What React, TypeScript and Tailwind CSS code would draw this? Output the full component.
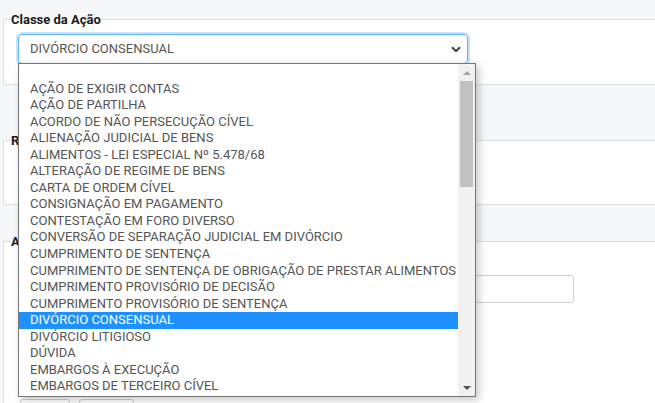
const options = [
  '',
  'AÇÃO DE EXIGIR CONTAS',
  'AÇÃO DE PARTILHA',
  'ACORDO DE NÃO PERSECUÇÃO CÍVEL',
  'ALIENAÇÃO JUDICIAL DE BENS',
  'ALIMENTOS - LEI ESPECIAL Nº 5.478/68',
  'ALTERAÇÃO DE REGIME DE BENS',
  'CARTA DE ORDEM CÍVEL',
  'CONSIGNAÇÃO EM PAGAMENTO',
  'CONTESTAÇÃO EM FORO DIVERSO',
  'CONVERSÃO DE SEPARAÇÃO JUDICIAL EM DIVÓRCIO',
  'CUMPRIMENTO DE SENTENÇA',
  'CUMPRIMENTO DE SENTENÇA DE OBRIGAÇÃO DE PRESTAR ALIMENTOS',
  'CUMPRIMENTO PROVISÓRIO DE DECISÃO',
  'CUMPRIMENTO PROVISÓRIO DE SENTENÇA',
  'DIVÓRCIO CONSENSUAL',
  'DIVÓRCIO LITIGIOSO',
  'DÚVIDA',
  'EMBARGOS À EXECUÇÃO',
  'EMBARGOS DE TERCEIRO CÍVEL',
];

const selected = 'DIVÓRCIO CONSENSUAL';

export default function App() {
  return (
    <div
      className="relative w-[655px] h-[403px] overflow-hidden bg-[#f6f7f9] pl-[3px] pt-[12px]"
      style={{ fontFamily: 'Roboto, "Liberation Sans", sans-serif' }}
    >
      {/* Classe da Ação */}
      <fieldset className="w-[720px] h-[73px] border border-[#dcdee2] bg-white">
        <legend className="ml-[7px] text-[13px] leading-[15px] font-bold text-[#1a1a1a]">
          Classe da Ação
        </legend>
        <div className="px-[14px] pt-[7px]">
          <div className="w-[450px] h-[30px] rounded-[4px] border border-[#5bb4ef] shadow-[0_0_0_2px_rgba(102,175,233,0.35)] flex items-center justify-between pl-[11px] pr-[5px] text-[13px] text-[#555]">
            <span>{selected}</span>
            <svg width="10" height="7" viewBox="0 0 10 7" className="mr-[1px]">
              <path d="M1 1.2 L5 5 L9 1.2" fill="none" stroke="#444" strokeWidth="2" />
            </svg>
          </div>
        </div>
      </fieldset>

      {/* Rito */}
      <fieldset className="mt-[48px] w-[720px] h-[72px] border border-[#dcdee2] bg-white">
        <legend className="ml-[7px] text-[13px] leading-[15px] font-bold text-[#1a1a1a]">
          Rito
        </legend>
      </fieldset>

      {/* Assunto */}
      <fieldset className="mt-[29px] w-[720px] h-[200px] border border-[#dcdee2] bg-white">
        <legend className="ml-[7px] text-[13px] leading-[15px] font-bold text-[#1a1a1a]">
          Assunto
        </legend>
        <div className="px-[14px]">
          <div className="mt-[26px] w-[556px] h-[28px] rounded-[3px] border border-[#ccd0d6] bg-white" />
          <div className="mt-[96px] pl-[2px] flex gap-[9px]">
            <div className="w-[50px] h-[24px] rounded-[3px] border border-[#ccd0d6]" />
            <div className="w-[55px] h-[24px] rounded-[3px] border border-[#ccd0d6]" />
          </div>
        </div>
      </fieldset>

      {/* open dropdown list */}
      <div className="absolute left-[18px] top-[63px] w-[458px] h-[334px] border border-[#767676] bg-white shadow-[3px_3px_8px_rgba(0,0,0,0.22)] flex">
        <div className="flex-1">
          {options.map((o, i) => (
            <div
              key={i}
              className={
                o === selected
                  ? 'h-[16.55px] leading-[16.55px] pl-[11px] text-[13px] whitespace-nowrap bg-[#1e90ff] text-white'
                  : 'h-[16.55px] leading-[16.55px] pl-[11px] text-[13px] whitespace-nowrap text-[#555]'
              }
            >
              {o}
            </div>
          ))}
        </div>
        <div className="w-[17px] bg-[#f1f1f1] flex flex-col items-center">
          <div className="h-[17px] flex items-center justify-center">
            <svg width="8" height="4" viewBox="0 0 8 4">
              <path d="M0 4 L4 0 L8 4 Z" fill="#a3a3a3" />
            </svg>
          </div>
          <div className="w-[13px] h-[106px] bg-[#c1c1c1]" />
          <div className="flex-1" />
          <div className="h-[17px] flex items-center justify-center">
            <svg width="8" height="4" viewBox="0 0 8 4">
              <path d="M0 0 L8 0 L4 4 Z" fill="#505050" />
            </svg>
          </div>
        </div>
      </div>
    </div>
  );
}
